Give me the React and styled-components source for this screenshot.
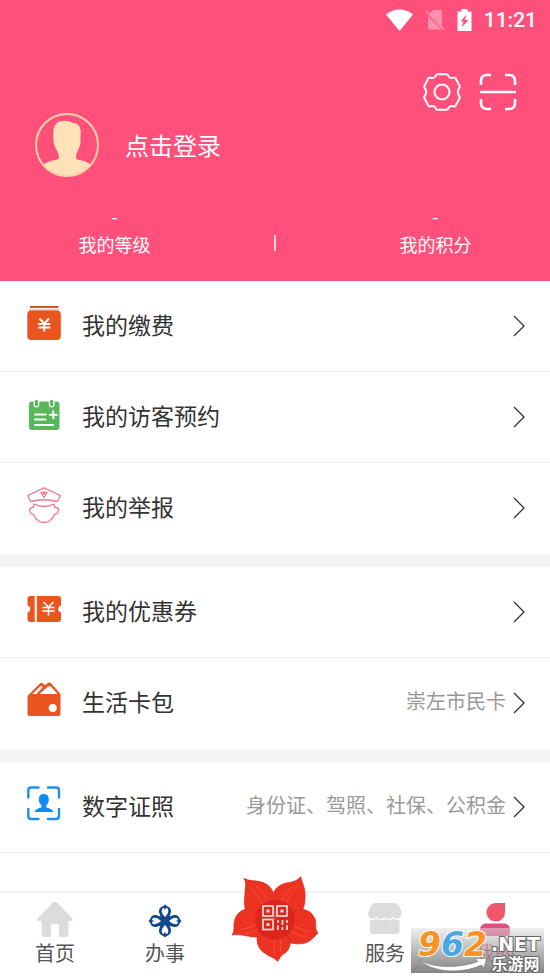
import React from "react";
import styled, { createGlobalStyle } from "styled-components";

const GlobalStyle = createGlobalStyle`
  * {
    box-sizing: border-box;
  }

  body {
    margin: 0;
    background: #fff;
    font-family: "Noto Sans CJK SC", sans-serif;
    color: #333;
  }

  a {
    color: inherit;
    text-decoration: none;
  }

  button {
    padding: 0;
    border: 0;
    background: none;
    color: inherit;
    font: inherit;
    cursor: pointer;
  }

  svg {
    display: block;
    flex: none;
  }
`;

const Page = styled.div`
  display: flex;
  flex-direction: column;
  min-height: 100vh;
`;

const Header = styled.header`
  padding-bottom: 24px;
  background: #ff4f7b;
  color: #fff;
`;

const StatusBar = styled.div`
  display: flex;
  justify-content: flex-end;
  align-items: center;
  gap: 12px;
  height: 40px;
  padding-right: 13px;
  font-family: Roboto, sans-serif;
  font-size: 21px;
  font-weight: 500;
`;

const Tools = styled.div`
  display: flex;
  justify-content: flex-end;
  gap: 18px;
  padding: 33px 33px 0;
`;

const Profile = styled.button`
  display: flex;
  align-items: center;
  gap: 26px;
  margin: 1px 0 0 35px;
  font-size: 24px;
  line-height: 36px;
`;

const Stats = styled.div`
  display: grid;
  grid-template-columns: 5fr 2fr 5fr;
  justify-items: center;
  align-items: end;
  margin-top: 25px;
`;

const Stat = styled.div`
  display: flex;
  flex-direction: column;
  align-items: center;
  gap: 2px;
  font-size: 18px;
  line-height: 26px;
`;

const Divider = styled.div`
  width: 2px;
  height: 16px;
  margin-bottom: 6px;
  background: #ffd3de;
`;

const Group = styled.section`
  & + & {
    border-top: 13px solid #f4f4f4;
  }
`;

const Row = styled.a`
  display: flex;
  align-items: center;
  height: 91px;
  padding: 0 25px 0 27px;
  border-bottom: 1px solid ${(props) => (props.$last ? "#fff" : "#f1f1f1")};
`;

const RowIcon = styled.svg.attrs({ viewBox: "0 0 34 36", fill: "none" })`
  width: 34px;
  height: 36px;
  margin-bottom: 6px;
`;

const RowTitle = styled.span`
  margin-left: 21px;
  padding-bottom: 4px;
  font-size: 23px;
  line-height: 34px;
`;

const RowNote = styled.span`
  margin-left: auto;
  margin-right: 7px;
  padding-bottom: 4px;
  color: #999;
  font-size: 20px;
  line-height: 30px;
`;

const TabBar = styled.nav`
  position: relative;
  display: flex;
  align-items: flex-end;
  height: 88px;
  margin-top: auto;
  padding-bottom: 14px;
  border-top: 2px solid #f3f3f3;
`;

const Tab = styled.a`
  display: flex;
  flex: 1;
  flex-direction: column;
  align-items: center;
  gap: 4px;
  min-width: 0;
  color: ${(props) => (props.$active ? "#ff4f7b" : "#555")};
  font-size: 20px;
  line-height: 24px;
`;

const SiteMark = styled.div`
  position: absolute;
  right: 6px;
  bottom: 6px;
  display: flex;
  width: 133px;
  height: 45px;
  padding: 3px 2px 0 7px;
  background: linear-gradient(rgba(225, 225, 225, 0.5), rgba(110, 110, 110, 0.85));
`;

const MarkLeft = styled.div`
  width: 73px;
`;

const MarkDigits = styled.div`
  font-family: "DejaVu Sans", sans-serif;
  font-size: 33px;
  font-weight: 700;
  font-style: italic;
  line-height: 28px;
  -webkit-text-stroke: 2px #fff;
  paint-order: stroke fill;
`;

const Digit = styled.span`
  color: ${(props) => props.$color};
`;

const MarkRight = styled.div`
  display: flex;
  flex-direction: column;
  align-items: center;
  color: #fff;
  font-weight: 700;
  -webkit-text-stroke: 2px #666;
  paint-order: stroke fill;
`;

const MarkDomain = styled.span`
  margin-top: 3px;
  font-family: "DejaVu Sans", sans-serif;
  font-size: 19px;
  line-height: 20px;
`;

const MarkName = styled.span`
  font-size: 16px;
  line-height: 18px;
`;

const WifiIcon = () => (
  <svg width="27" height="22" viewBox="0 0 27 22">
    <path d="M0 5.500C8-1.300 19-1.300 27 5.500L13.500 22Z" fill="#fff" />
  </svg>
);

const NoSimIcon = () => (
  <svg width="20" height="22" viewBox="0 0 20 22">
    <path d="M8 1H17V18L5 6V4Z" fill="#ff8fac" />
    <path d="M3 7L16.500 20.500H4Q3 20.500 3 19.500Z" fill="#ff8fac" />
    <path d="M1 2L19 21" stroke="#ff8fac" strokeWidth="1.600" />
  </svg>
);

const BatteryIcon = () => (
  <svg width="15" height="22" viewBox="0 0 15 22">
    <path d="M4.500 0H10.500V2.500H14.500V22H.500V2.500H4.500Z" fill="#fff" />
    <path d="M9.500 5.500L3.500 12.500H6.500L4.500 18.500L11.500 11H8Z" fill="#ff4f7b" />
  </svg>
);

const GearIcon = () => (
  <svg width="38" height="38" viewBox="-19 -19 38 38" fill="none" stroke="#fff" strokeWidth="2">
    <path
      d="M-4.500-17.800H4.500Q6-17.800 6.500-16Q7.600-13.200 11-14.200Q12.800-15 13.800-13.400L17.400-6.500Q18.400-5 17-3.800Q14.800 0 17 3.800Q18.400 5 17.400 6.500L13.800 13.400Q12.800 15 11 14.200Q7.600 13.200 6.500 16Q6 17.800 4.500 17.800H-4.500Q-6 17.800-6.500 16Q-7.600 13.200-11 14.200Q-12.800 15-13.800 13.400L-17.400 6.500Q-18.400 5-17 3.800Q-14.800 0-17-3.800Q-18.400-5-17.400-6.500L-13.800-13.400Q-12.800-15-11-14.200Q-7.600-13.200-6.500-16Q-6-17.800-4.500-17.800Z"
      strokeLinejoin="round"
    />
    <circle r="7.500" />
  </svg>
);

const ScanIcon = () => (
  <svg width="38" height="38" viewBox="0 0 38 38" fill="none" stroke="#fff" strokeWidth="2.600">
    <path d="M12 2H8Q2 2 2 8V12M26 2H30Q36 2 36 8V12M2 26V30Q2 36 8 36H12M36 26V30Q36 36 30 36H26M1 19H37" />
  </svg>
);

const Avatar = () => (
  <svg width="64" height="66" viewBox="0 0 64 66">
    <circle cx="32" cy="33" r="31" fill="none" stroke="#ffd3a6" strokeWidth="2" />
    <path
      d="M18.500 28C18 20 18 15 21 12C23 8 33 7.500 38 11C45 11 46 17 45.500 22V28C46 36 41 39 41 46C42 49 48 47 55.500 52.500A31 31 0 0 1 8.500 52.500C16 47 23 49 24 46C24 39 18.500 36 18.500 28Z"
      fill="#ffe2b8"
    />
  </svg>
);

const Chevron = () => (
  <svg width="12" height="22" viewBox="0 0 12 22" fill="none" stroke="#333" strokeWidth="1.300">
    <path d="M1 1L11 11L1 21" />
  </svg>
);

const FeeIcon = () => (
  <RowIcon>
    <rect x="3" y="1" width="28.500" height="2" fill="#d9532a" />
    <rect x="2" y="4" width="30" height="2" fill="#f9c7b3" />
    <rect x=".300" y="5.500" width="33.500" height="29.500" rx="4" fill="#ea541f" />
    <path
      d="M12.500 13.500L17.300 18.500L22 13.500M17.300 18.500V26.500M11.300 19H23.300M11.300 22.500H23.300"
      stroke="#fff"
      strokeWidth="1.900"
    />
  </RowIcon>
);

const VisitIcon = () => (
  <RowIcon>
    <rect x="2" y="5.500" width="30.500" height="28.500" rx="3" fill="#58b75b" />
    <rect x="7.200" y="3.200" width="4.500" height="7.600" rx="2.200" fill="#58b75b" stroke="#fff" strokeWidth="1.300" />
    <rect x="22.400" y="3.200" width="4.500" height="7.600" rx="2.200" fill="#58b75b" stroke="#fff" strokeWidth="1.300" />
    <path
      d="M8 18.500H18.500M8 23.500H18.500M8 29H26M26.300 15.300V22.300M22.800 18.800H29.800"
      stroke="#fff"
      strokeWidth="2"
      strokeLinecap="round"
    />
  </RowIcon>
);

const ReportIcon = () => (
  <RowIcon>
    <g stroke="#ee7591" strokeWidth="1.300" strokeLinejoin="round">
      <path d="M17 .800L.800 8.500L3.600 14.500Q17 11 30.300 14.500L33.500 8.500Z" />
      <path d="M14 5.500H20L17 10.500ZM16 6.800H18" />
      <path d="M7 17Q17 22 27 17L28 20.500Q32 20.500 31.500 23Q31 27 27.500 27.500Q24 35.500 17 35.500Q10 35.500 6.500 27.500Q3 27 2.600 23Q2.500 20.500 6 20.500Z" />
    </g>
  </RowIcon>
);

const CouponIcon = () => (
  <RowIcon>
    <path
      d="M3.500 5H7.700V31H3.500Q.500 31 .500 28V21.500A3.600 3.600 0 0 0 .500 14.500V8Q.500 5 3.500 5ZM9.800 5H31Q34 5 34 8V14.500A3.600 3.600 0 0 0 34 21.500V28Q34 31 31 31H9.800Z"
      fill="#ea541f"
    />
    <path
      d="M16.500 11L21.500 16L26.500 11M21.500 16V24.500M15.300 16.500H27.700M15.300 20H27.700"
      stroke="#fff"
      strokeWidth="1.600"
    />
  </RowIcon>
);

const WalletIcon = () => (
  <RowIcon>
    <path
      d="M.500 14L12.800 1.500Q14.200 0 15.800 1.300L18 3.200L20.800 1Q22.500 0 24 1.300L33.500 12V32Q33.500 34 31.500 34H2.500Q.500 34 .500 32Z"
      fill="#ea541f"
    />
    <path d="M5.500 12L13 4.500Q14.300 3.500 15.800 5L9.500 12ZM12.500 12L21 4.500Q22.500 3.500 24 4.800L30.500 12Z" fill="#fff" />
    <circle cx="25.700" cy="26" r="4" fill="#fff" />
  </RowIcon>
);

const LicenseIcon = () => (
  <RowIcon>
    <path
      d="M11.500 1.500H4Q1.300 1.500 1.300 4.500V11.500M21 1.500H29Q32 1.500 32 4.500V11.500M1.300 23V30Q1.300 33 4 33H11.500M32 23V30Q32 33 29 33H21"
      stroke="#1e90f5"
      strokeWidth="2.400"
      strokeLinecap="round"
    />
    <path
      d="M16.700 8Q21.800 8 21.800 13.500Q21.800 17.500 19.300 19V21.500Q25.500 22.500 26.500 26H7.500Q8.500 22.500 14.300 21.500V19Q11.800 17.500 11.800 13.500Q11.800 8 16.700 8Z"
      fill="#0d8cf7"
    />
  </RowIcon>
);

const HomeIcon = () => (
  <svg width="36" height="36" viewBox="0 0 36 36">
    <path
      d="M16 1.500Q18 0 20 1.500L35 17Q37 20 34 20H31.500V33Q31.500 36 28.500 36H22V24Q22 23 21 23H15Q14 23 14 24V36H7.500Q4.500 36 4.500 33V20H2Q-1 20 1 17Z"
      fill="#dcdcdc"
    />
  </svg>
);

const ServeIcon = () => (
  <svg width="36" height="36" viewBox="-18 -20 36 36">
    {[0, 90, 180, 270].map((angle) => (
      <g key={angle} transform={`rotate(${angle})`}>
        <path
          d="M0-16.500L1.800-15Q6.500-13.500 6-9Q5-4.500 2.500 0H-2.500Q-5-4.500-6-9Q-6.500-13.500-1.800-15Z"
          fill="#10488c"
        />
        <path
          d="M0-4Q-3.500-7.500-3.300-10.500Q-2.800-13.500-.800-12.800L0-10.500L.800-12.800Q2.800-13.500 3.300-10.500Q3.500-7.500 0-4Z"
          fill="#fff"
        />
      </g>
    ))}
  </svg>
);

const ShopIcon = () => (
  <svg width="36" height="36" viewBox="0 0 36 36">
    <path
      d="M8 2H28Q30.500 2 32 4.500Q34.500 9 34.500 13Q34 17.500 30 17.500Q27 17.500 25.500 16Q23 19 20 17.500Q17.500 15.500 15.500 17.500Q12 19 10 16Q8.500 17.500 5.500 17.500Q1.500 17.500 1.300 13Q1.300 9 4 4.500Q5.500 2 8 2Z"
      fill="#dcdcdc"
    />
    <path
      d="M3 19Q7.500 19 9.500 17.800Q12.500 20.500 16 18.800Q18 17.500 20 18.800Q23.500 20.500 26 17.800Q28 19 32.500 19V30Q32.500 33 29.500 33H6Q3 33 3 30Z"
      fill="#dcdcdc"
    />
  </svg>
);

const MineIcon = () => (
  <svg width="36" height="36" viewBox="0 0 36 36">
    <path d="M28 2V11A9.300 9.300 0 1 1 18.500 2Z" fill="#f0566b" />
    <path d="M8 22.500H28Q33 24 33 28V32Q33 35 30 35H6Q3 35 3 32V28Q3 24 8 22.500Z" fill="#df4f80" />
  </svg>
);

const FlowerIcon = () => (
  <svg width="88" height="90" viewBox="0 0 88 90">
    <g fill="#ec3322" stroke="#d9281c" strokeWidth=".800">
      <path d="M13 3.300C18 7 27 4.500 35 9C40 12 43 17 43.500 23L42 47L15 35C12 29 14 24 14 18C14 12 16 9 13 3.300Z" />
      <path d="M69.700 1.700C71 8 74.500 13 74 22C74 28 73 32 71 36L46 47L43 17.300C44 13 50 9 56 8C62 7 66 6 69.700 1.700Z" />
      <path d="M87 58.300C83 61 81 66 74 68C68 69.500 61 69 55 66L44 46L66 35C75 33 81 37 84 44C86 50 83 54 87 58.300Z" />
      <path d="M46.700 86.300C43 82 36 81 31 76C26 71 26 66 26 58L43 44L58 63C61 68 58 75 54 78C49 81 49 83 46.700 86.300Z" />
      <path d="M1 60C5 54 1 49 5 42C8 36 14 33 21 34L45 46L31 60C26 63 22 62 17 61C11 60 6 59 1 60Z" />
    </g>
    <g fill="none" stroke="#f0513d" strokeWidth="1">
      <path d="M19 12Q27 20 33 31M25 11Q34 19 37 28M66 11Q58 20 53 31M61 12Q54 18 49 28M79 57Q70 54 61 50M76 62Q68 61 59 56M44 79Q42 71 43 64M50 77Q50 70 49 64M9 55Q18 53 26 49M14 59Q22 56 28 54" />
    </g>
    <circle cx="44" cy="44.500" r="20" fill="#d9231b" opacity=".850" />
    <g fill="none" stroke="#ffe0d5" strokeWidth="1.700">
      <rect x="32" y="31" width="10" height="10" />
      <rect x="46" y="31" width="10" height="10" />
      <rect x="32" y="44.500" width="10" height="10" />
      <path d="M47 45V48M47 50V55M51.500 45V50M51.500 52V55M56 45V48M56 50V55" />
    </g>
    <path d="M35.500 34.500H38.500V37.500H35.500ZM49.500 34.500H52.500V37.500H49.500ZM35.500 48H38.500V51H35.500Z" fill="#ffe0d5" />
  </svg>
);

const Swoosh = () => (
  <svg width="72" height="14" viewBox="0 0 72 14">
    <path
      d="M1 0C12 9 40 10 60 2.500L57 .500L69-2.500L66 9L63.500 6C42 16 12 13 1 0Z"
      fill="#fff"
      stroke="#777"
      strokeWidth=".600"
    />
  </svg>
);

const groups = [
  [
    { title: "我的缴费", Icon: FeeIcon },
    { title: "我的访客预约", Icon: VisitIcon },
    { title: "我的举报", Icon: ReportIcon },
  ],
  [
    { title: "我的优惠券", Icon: CouponIcon },
    { title: "生活卡包", Icon: WalletIcon, note: "崇左市民卡" },
  ],
  [{ title: "数字证照", Icon: LicenseIcon, note: "身份证、驾照、社保、公积金", line: true }],
];

function App() {
  return (
    <>
      <GlobalStyle />
      <Page>
        <Header>
          <StatusBar>
            <WifiIcon />
            <NoSimIcon />
            <BatteryIcon />
            <span>11:21</span>
          </StatusBar>
          <Tools>
            <button type="button" aria-label="设置">
              <GearIcon />
            </button>
            <button type="button" aria-label="扫一扫">
              <ScanIcon />
            </button>
          </Tools>
          <Profile type="button">
            <Avatar />
            点击登录
          </Profile>
          <Stats>
            <Stat>
              <span>-</span>
              <span>我的等级</span>
            </Stat>
            <Divider />
            <Stat>
              <span>-</span>
              <span>我的积分</span>
            </Stat>
          </Stats>
        </Header>

        <main>
          {groups.map((rows, i) => (
            <Group key={i}>
              {rows.map(({ title, Icon, note, line }, j) => (
                <Row href="#" key={title} $last={!line && j === rows.length - 1}>
                  <Icon />
                  <RowTitle>{title}</RowTitle>
                  <RowNote>{note}</RowNote>
                  <Chevron />
                </Row>
              ))}
            </Group>
          ))}
        </main>

        <TabBar>
          <Tab href="#">
            <HomeIcon />
            首页
          </Tab>
          <Tab href="#">
            <ServeIcon />
            办事
          </Tab>
          <Tab href="#" aria-label="二维码">
            <FlowerIcon />
          </Tab>
          <Tab href="#">
            <ShopIcon />
            服务
          </Tab>
          <Tab href="#" $active>
            <MineIcon />
            我的
          </Tab>
          <SiteMark>
            <MarkLeft>
              <MarkDigits>
                <Digit $color="#f7931e">9</Digit>
                <Digit $color="#4aa8e0">6</Digit>
                <Digit $color="#f7931e">2</Digit>
              </MarkDigits>
              <Swoosh />
            </MarkLeft>
            <MarkRight>
              <MarkDomain>.NET</MarkDomain>
              <MarkName>乐游网</MarkName>
            </MarkRight>
          </SiteMark>
        </TabBar>
      </Page>
    </>
  );
}

export default App;
